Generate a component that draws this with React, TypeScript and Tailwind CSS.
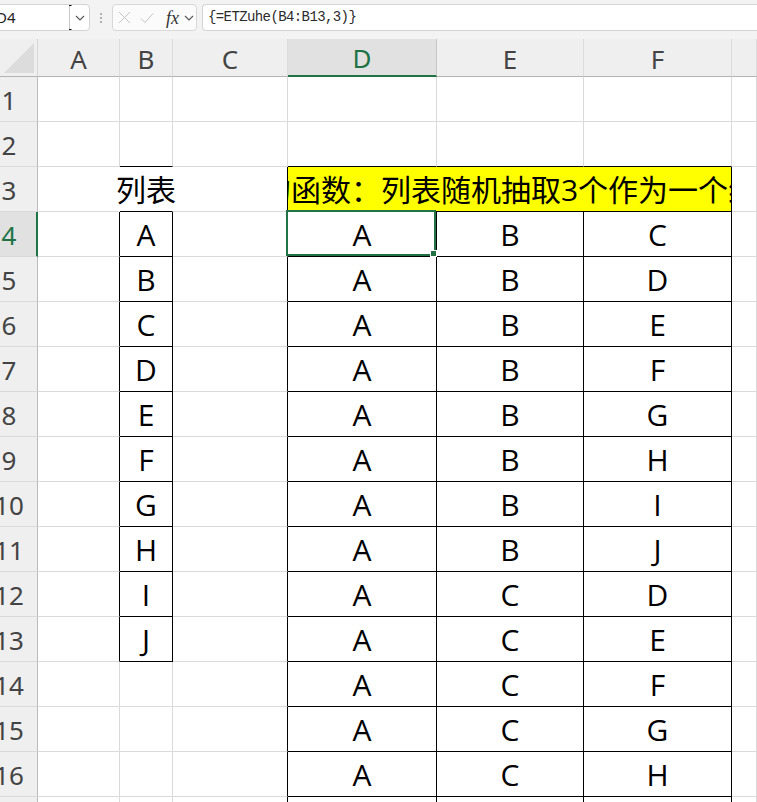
import React from "react";

// ── Data ──────────────────────────────────────────────────────────────────────

const LIST = ["A", "B", "C", "D", "E", "F", "G", "H", "I", "J"];

const COMBOS: Record<number, [string, string, string]> = {
  4: ["A", "B", "C"],
  5: ["A", "B", "D"],
  6: ["A", "B", "E"],
  7: ["A", "B", "F"],
  8: ["A", "B", "G"],
  9: ["A", "B", "H"],
  10: ["A", "B", "I"],
  11: ["A", "B", "J"],
  12: ["A", "C", "D"],
  13: ["A", "C", "E"],
  14: ["A", "C", "F"],
  15: ["A", "C", "G"],
  16: ["A", "C", "H"],
  17: ["A", "C", "I"],
};

const ROWS = Array.from({ length: 17 }, (_, i) => i + 1);
const COL_LETTERS = ["A", "B", "C", "D", "E", "F", ""];

const HDR_FONT = "font-['Segoe_UI','Noto_Sans',sans-serif]";
const CELL_FONT = "font-['Open_Sans','Noto_Sans_CJK_SC',sans-serif]";

// col index: 1=A .. 7=G
function boxed(c: number, r: number) {
  if (c === 2 && r >= 4 && r <= 13) return true;
  if (c >= 4 && c <= 6 && r >= 3) return true;
  return false;
}

function cellBorders(c: number, r: number) {
  const rightBlack = boxed(c, r) || boxed(c + 1, r);
  const bottomBlack = boxed(c, r) || boxed(c, r + 1) || (c === 2 && r === 2);
  const hideRight = r === 3 && (c === 1 || c === 2);
  const right = hideRight
    ? "border-r-transparent"
    : rightBlack
      ? "border-r-black"
      : "border-r-[#dadada]";
  const bottom = bottomBlack ? "border-b-black" : "border-b-[#dadada]";
  return `${right} ${bottom}`;
}

// ── Formula bar ───────────────────────────────────────────────────────────────

function Chevron() {
  return (
    <svg width="10" height="6" viewBox="0 0 10 6" className="shrink-0">
      <path d="M1 1l4 4 4-4" fill="none" stroke="#555" strokeWidth="1.1" />
    </svg>
  );
}

function FormulaBar() {
  return (
    <div className="h-[39px] bg-[#f3f3f3] flex items-start pt-[4px]">
      {/* Name box */}
      <div className="-ml-[10px] w-[100px] h-[27px] bg-white border border-[#d4d4d4] rounded-[4px] flex items-center">
        <span className={`${HDR_FONT} text-[15px] text-[#222] pl-[5px] flex-1`}>D4</span>
        <svg width="4" height="27" viewBox="0 0 4 27" className="shrink-0">
          <path d="M1.5 1v25" stroke="#c8c8c8" strokeWidth="1" />
          <path d="M1 1.5h2.5M1 25.5h2.5" stroke="#111" strokeWidth="1" />
        </svg>
        <div className="ml-[3px] mr-[4px]">
          <Chevron />
        </div>
      </div>
      {/* Grip */}
      <div className="w-[22px] h-[27px] flex flex-col items-center justify-center gap-[2px]">
        <span className="w-[2px] h-[2px] rounded-full bg-[#9a9a9a]" />
        <span className="w-[2px] h-[2px] rounded-full bg-[#9a9a9a]" />
        <span className="w-[2px] h-[2px] rounded-full bg-[#9a9a9a]" />
      </div>
      {/* Cancel / enter / fx */}
      <div className="w-[85px] h-[27px] bg-[#fbfbfb] border border-[#d8d8d8] rounded-[4px] flex items-center pl-[5px]">
        <svg width="13" height="13" viewBox="0 0 13 13" className="shrink-0">
          <path d="M1 1l11 11M12 1L1 12" stroke="#c3c3c3" strokeWidth="1" />
        </svg>
        <svg width="14" height="12" viewBox="0 0 14 12" className="shrink-0 ml-[9px]">
          <path d="M1 6.5l4 4 8-9" fill="none" stroke="#c3c3c3" strokeWidth="1" />
        </svg>
        <span className="ml-[12px] font-['Liberation_Serif',serif] italic text-[18px] leading-none text-[#333]">
          fx
        </span>
        <div className="ml-[5px]">
          <Chevron />
        </div>
      </div>
      {/* Formula input */}
      <div className="ml-[5px] flex-1 h-[27px] bg-white border border-r-0 border-[#d4d4d4] rounded-l-[4px] flex items-center pl-[5px]">
        <span className="font-['Liberation_Mono',monospace] text-[14px] tracking-[-0.6px] text-[#2b2b2b]">
          {"{=ETZuhe(B4:B13,3)}"}
        </span>
      </div>
    </div>
  );
}

// ── Sheet ─────────────────────────────────────────────────────────────────────

function HeaderRow() {
  return (
    <>
      <div className="h-[38px] bg-[#efefef] border-r border-b border-r-[#d6d6d6] border-b-[#b3b3b3] flex items-end justify-end pr-[3px] pb-[3px]">
        <svg width="30" height="30" viewBox="0 0 30 30">
          <path d="M30 0V30H0Z" fill="#dcdcdc" />
        </svg>
      </div>
      {COL_LETTERS.map((l, i) =>
        l === "D" ? (
          <div
            key={i}
            className={`${HDR_FONT} h-[38px] bg-[#e1e1e1] border-r border-r-[#c8c8c8] border-b-2 border-b-[#217346] flex items-center justify-center pt-[3px] text-[26px] text-[#217346]`}
          >
            {l}
          </div>
        ) : (
          <div
            key={i}
            className={`${HDR_FONT} h-[38px] bg-[#efefef] border-r border-r-[#dcdcdc] border-b border-b-[#b3b3b3] flex items-center justify-center pt-[3px] text-[26px] text-[#444]`}
          >
            {l}
          </div>
        ),
      )}
    </>
  );
}

function RowHeader({ r }: { r: number }) {
  const active = r === 4;
  return (
    <div
      className={
        active
          ? "h-[45px] bg-[#e1e1e1] border-r-2 border-b border-r-[#217346] border-b-[#dadada] overflow-hidden flex items-center pt-[3px]"
          : "h-[45px] bg-[#efefef] border-r border-b border-r-[#bcbcbc] border-b-[#dadada] overflow-hidden flex items-center pt-[3px]"
      }
    >
      <span
        className={`${HDR_FONT} w-[40px] -ml-[11px] shrink-0 text-center text-[26px] ${active ? "text-[#217346]" : "text-[#444]"}`}
      >
        {r}
      </span>
    </div>
  );
}

function Cell({ c, r, children }: { c: number; r: number; children?: React.ReactNode }) {
  return (
    <div
      className={`${CELL_FONT} relative h-[45px] border-r border-b ${cellBorders(c, r)} flex items-center justify-center whitespace-nowrap text-[30px] text-black`}
    >
      {children}
    </div>
  );
}

function SheetRow({ r }: { r: number }) {
  const combo = COMBOS[r];
  return (
    <>
      <RowHeader r={r} />
      <Cell c={1} r={r} />
      <Cell c={2} r={r}>
        {r === 3 ? "列表" : r >= 4 && r <= 13 ? LIST[r - 4] : null}
      </Cell>
      <Cell c={3} r={r} />
      {r === 3 ? (
        <div
          className={`${CELL_FONT} col-span-3 h-[45px] bg-[#ffff00] border-r border-b border-r-black border-b-black overflow-hidden flex items-center justify-center whitespace-nowrap text-[30px] text-black`}
        >
          的函数：列表随机抽取3个作为一个组
        </div>
      ) : (
        <>
          <Cell c={4} r={r}>
            {combo?.[0]}
            {r === 4 && (
              <div className="absolute -left-[2px] -top-[2px] right-0 bottom-0 border-2 border-[#217346]">
                <div className="absolute -right-[3px] -bottom-[3px] w-[7px] h-[7px] bg-[#217346] border border-white" />
              </div>
            )}
          </Cell>
          <Cell c={5} r={r}>
            {combo?.[1]}
          </Cell>
          <Cell c={6} r={r}>
            {combo?.[2]}
          </Cell>
        </>
      )}
      <Cell c={7} r={r} />
    </>
  );
}

export default function App() {
  return (
    <div className="w-[757px] h-[802px] overflow-hidden bg-white">
      <FormulaBar />
      <div className="grid grid-cols-[38px_82px_53px_115px_149px_147px_148px_1fr]">
        <HeaderRow />
        {ROWS.map((r) => (
          <SheetRow key={r} r={r} />
        ))}
      </div>
    </div>
  );
}
